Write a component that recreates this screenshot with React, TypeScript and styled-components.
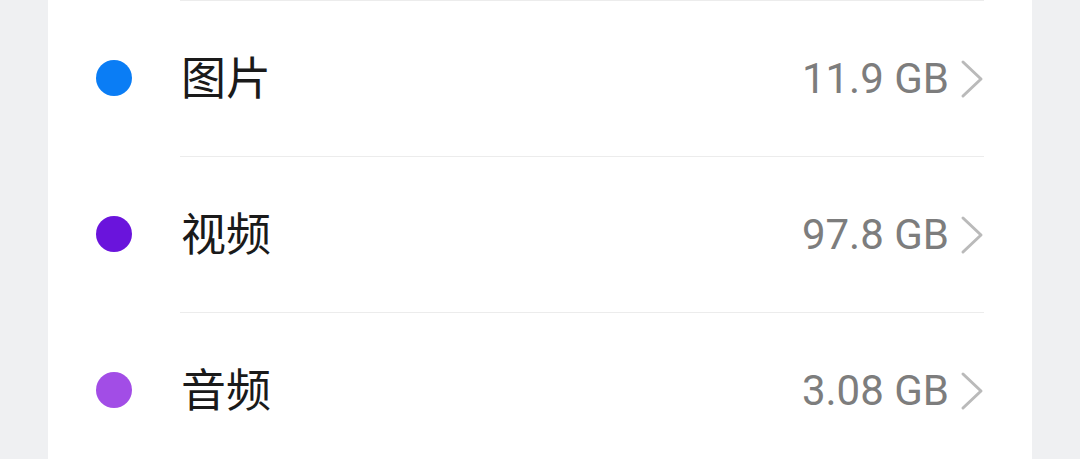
import React from 'react'
import styled, { createGlobalStyle } from 'styled-components'

const GlobalStyle = createGlobalStyle`
  html, body {
    margin: 0;
    padding: 0;
    background: #eff0f2;
    overflow: hidden;
  }
  body {
    font-family: Roboto, "Noto Sans CJK SC", sans-serif;
  }
`

interface StorageItem {
  label: string
  size: string
  color: string
}

const items: Array<StorageItem> = [
  { label: '图片', size: '11.9 GB', color: '#0a7df5' },
  { label: '视频', size: '97.8 GB', color: '#6a14dc' },
  { label: '音频', size: '3.08 GB', color: '#a24de6' },
]

const Chevron: React.FC = () => (
  <ChevronSvg viewBox="0 0 24 40" width={24} height={40}>
    <polyline
      points="3,3 21,20 3,37"
      fill="none"
      stroke="#bababa"
      strokeWidth={3}
      strokeLinecap="round"
      strokeLinejoin="round"
    />
  </ChevronSvg>
)

const App: React.FC = () => {
  return (
    <>
      <GlobalStyle />
      <Page>
        <Card>
          {items.map((item, i) => (
            <Row key={i}>
              <Dot color={item.color} />
              <Content>
                <Label>{item.label}</Label>
                <Right>
                  <Size>{item.size}</Size>
                  <Chevron />
                </Right>
              </Content>
            </Row>
          ))}
        </Card>
      </Page>
    </>
  )
}

const Page = styled.div`
  height: 459px;
  padding: 0 48px;
  box-sizing: border-box;
`

const Card = styled.div`
  background: #ffffff;
  height: 100%;
  display: flex;
  flex-direction: column;
`

const Row = styled.div`
  display: flex;
  flex-direction: row;
  align-items: center;
  height: 156px;
  flex-shrink: 0;
  padding-left: 48px;
`

interface DotProps {
  color: string
}

const Dot = styled.div<DotProps>`
  width: 36px;
  height: 36px;
  border-radius: 50%;
  background: ${props => props.color};
  flex-shrink: 0;
  margin-right: 48px;
`

const Content = styled.div`
  flex: 1;
  height: 100%;
  box-sizing: border-box;
  border-top: 1.5px solid #ececec;
  margin-right: 48px;
  display: flex;
  align-items: center;
  justify-content: space-between;
`

const Label = styled.span`
  font-family: "Noto Sans CJK SC", sans-serif;
  font-size: 45px;
  font-weight: 400;
  line-height: 1;
  color: #1a1a1a;
  padding-left: 1px;
  padding-bottom: 6px;
`

const Right = styled.div`
  display: flex;
  align-items: center;
  gap: 11px;
`

const Size = styled.span`
  font-family: Roboto, sans-serif;
  font-size: 42px;
  color: #7d7d7d;
`

const ChevronSvg = styled.svg`
  display: block;
`

export default App
